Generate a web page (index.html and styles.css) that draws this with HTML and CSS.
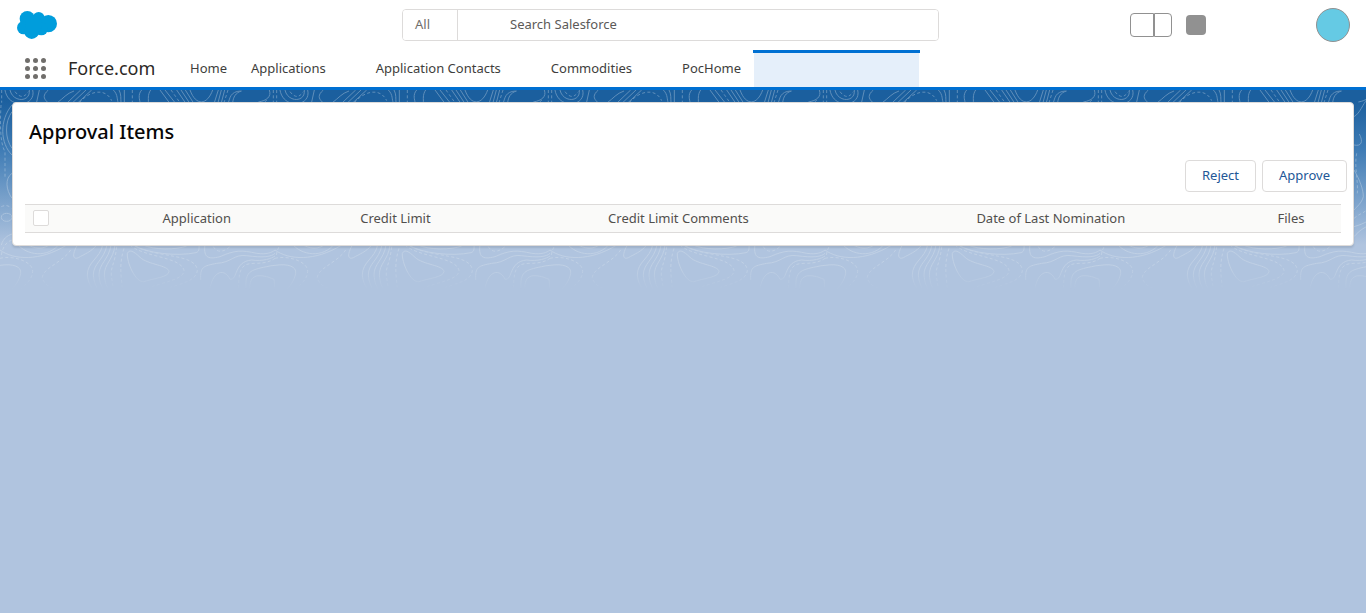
FILE: index.html
```
<!DOCTYPE html>
<html lang="en">
<head>
<meta charset="utf-8">
<title>Approval Items | Salesforce</title>
<link rel="stylesheet" href="styles.css">
</head>
<body>
<header class="header">
  <div class="topbar">
    <a class="logo" href="#" aria-label="Salesforce">
      <svg width="40" height="28" viewBox="0 0 120 84" fill="#009ddc" aria-hidden="true">
        <circle cx="31" cy="23" r="23"/><circle cx="65" cy="21" r="18"/><circle cx="94" cy="38" r="26"/>
        <circle cx="20" cy="50" r="20"/><circle cx="44" cy="62" r="22"/><circle cx="73" cy="53" r="20"/><circle cx="50" cy="40" r="26"/>
      </svg>
    </a>
    <form class="search">
      <button class="search-scope" type="button">All</button>
      <input class="search-input" type="search" placeholder="Search Salesforce" aria-label="Search Salesforce">
    </form>
    <div class="actions">
      <div class="favorites">
        <button class="fav fav-add" type="button" aria-label="Add favorite"></button>
        <button class="fav fav-list" type="button" aria-label="Favorites list"></button>
      </div>
      <button class="quick" type="button" aria-label="Global actions"></button>
      <button class="avatar" type="button" aria-label="View profile"></button>
    </div>
  </div>
  <nav class="nav" aria-label="Main">
    <button class="launcher" type="button" aria-label="App Launcher">
      <svg width="21" height="21" viewBox="0 0 21 21" fill="#706e6b" aria-hidden="true">
        <circle cx="2.500" cy="2.500" r="2.500"/><circle cx="10.500" cy="2.500" r="2.500"/><circle cx="18.500" cy="2.500" r="2.500"/>
        <circle cx="2.500" cy="10.500" r="2.500"/><circle cx="10.500" cy="10.500" r="2.500"/><circle cx="18.500" cy="10.500" r="2.500"/>
        <circle cx="2.500" cy="18.500" r="2.500"/><circle cx="10.500" cy="18.500" r="2.500"/><circle cx="18.500" cy="18.500" r="2.500"/>
      </svg>
    </button>
    <span class="app-name">Force.com</span>
    <a class="tab" href="#">Home</a>
    <a class="tab tab-menu" href="#">Applications</a>
    <a class="tab tab-menu" href="#">Application Contacts</a>
    <a class="tab tab-menu" href="#">Commodities</a>
    <a class="tab" href="#">PocHome</a>
    <a class="tab tab-active" href="#" aria-label="Current page" aria-current="page"></a>
  </nav>
</header>
<main class="page">
  <svg class="contours" width="100%" height="200" aria-hidden="true">
    <defs>
      <linearGradient id="fade" x1="0" y1="0" x2="0" y2="1">
        <stop offset="0.88" stop-color="#fff"/><stop offset="1" stop-color="#000"/>
      </linearGradient>
      <mask id="fade-mask"><rect width="100%" height="200" fill="url(#fade)"/></mask>
      <pattern id="topo" width="275" height="200" patternUnits="userSpaceOnUse" viewBox="0 0 825 600">
        <g fill="none" stroke="#dde6ee" stroke-width="3">
          <path d="M15 0C25 60 110 50 98 0M30 0C38 38 92 38 88 0M118 0L110 36M145 0C128 15 130 25 142 36M222 3C200 10 190 25 172 38M242 0L202 38M258 0L218 38M275 0L234 38M340 0C355 15 350 30 355 38M357 0C364 12 362 26 363 38M373 0V38M425 0C412 15 420 30 420 38M452 0C442 15 446 28 445 38M480 0L508 38M495 0L525 38M530 0L556 38M543 0L568 38M556 0L580 38M570 0C588 50 622 45 638 0M655 0L643 38M664 0L654 38M674 0L664 38M722 3C690 5 690 25 685 38M725 3C706 8 700 22 698 38M808 0C815 20 800 32 775 36"/>
          <path stroke-dasharray="9 7" d="M45 5C60 24 72 24 85 5M5 0V38M238 38C265 5 315 -10 335 32M397 0V38M513 0L540 38M684 0L672 38M820 0V38"/>
          <path d="M36 45C-2 90 0 160 36 195M36 65C14 95 14 145 36 175M36 250C14 265 18 300 36 325M4 382C4 366 36 366 36 382S4 398 4 382M4 465C10 445 20 438 36 432M762 80C780 70 790 40 800 30M762 165C785 170 790 155 778 132M762 240C780 270 790 300 790 320C785 340 770 350 762 360M762 410C780 405 790 400 800 395M762 440C780 420 790 415 800 410"/>
          <path stroke-dasharray="9 7" d="M3 45C0 100 0 160 15 185V260M4 350C15 345 25 345 34 355M4 495C8 470 20 455 36 450M770 190C762 230 775 270 772 310M762 385C780 370 790 370 800 360"/>
          <path d="M382 490C388 478 400 482 420 502C445 525 505 525 507 545C505 562 460 565 432 575C405 578 380 515 382 490ZM308 465C300 505 262 515 262 555C264 578 272 590 280 600M321 465C312 510 280 520 280 555C282 578 288 590 296 600M333 465C326 510 297 520 297 555C299 578 304 590 312 600M345 465C340 510 313 520 313 555C315 578 320 590 326 600M290 465C275 485 252 493 235 503C218 510 216 494 232 465M50 460C80 498 145 505 180 460M0 480C40 510 120 515 200 465M75 460C105 478 130 480 155 460M400 465C440 490 530 500 588 488C600 484 597 472 597 460M430 465C460 480 530 480 560 468M615 460C610 500 620 510 660 500C705 480 725 480 770 490C800 494 815 488 825 480M602 570C600 530 610 528 650 520C695 518 700 492 740 497C790 504 815 500 825 490M630 595C640 540 675 535 690 568C715 570 700 515 755 510C790 515 815 505 825 498M738 595C735 545 750 540 800 530Q812 527 825 526M0 526C40 520 65 530 62 550C58 572 45 590 32 600M750 600C745 550 780 550 822 568L825 600"/>
          <path stroke-dasharray="9 7" d="M212 480C185 520 125 535 127 565C135 590 160 595 175 600M0 505C40 495 100 515 98 545C95 570 80 580 60 600M350 470C345 520 332 530 334 555L340 600M372 475C360 515 360 540 368 600M390 465C430 502 545 500 552 542C550 570 490 575 445 595M405 468C470 504 590 490 592 542C588 575 540 580 500 597M640 470C655 495 680 480 692 468M715 595C718 540 720 520 765 520C800 520 815 512 825 505"/>
        </g>
      </pattern>
    </defs>
    <rect width="100%" height="200" fill="url(#topo)" opacity="0.35" mask="url(#fade-mask)"/>
  </svg>
  <section class="card">
    <h1 class="title">Approval Items</h1>
    <div class="buttons">
      <button class="btn" type="button">Reject</button>
      <button class="btn" type="button">Approve</button>
    </div>
    <table class="table">
      <colgroup>
        <col class="col-check"><col class="col-app"><col class="col-limit"><col class="col-comments"><col class="col-date"><col class="col-files">
      </colgroup>
      <thead>
        <tr>
          <th class="check-cell"><input class="check" type="checkbox" aria-label="Select all"></th>
          <th>Application</th>
          <th>Credit Limit</th>
          <th>Credit Limit Comments</th>
          <th>Date of Last Nomination</th>
          <th>Files</th>
        </tr>
      </thead>
    </table>
  </section>
</main>
</body>
</html>
```
FILE: styles.css
```
* { box-sizing: border-box; }
html { height: 100%; }
body {
  margin: 0;
  min-height: 100%;
  display: flex;
  flex-direction: column;
  background: #b0c4df;
  color: #3e3e3c;
  font: 13px/20px "Noto Sans", "Open Sans", sans-serif;
}
button, input { font: inherit; color: inherit; margin: 0; padding: 0; }
a { color: inherit; text-decoration: none; }

.header { background: #fff; border-bottom: 3px solid #0070d2; }
.topbar {
  display: grid;
  grid-template-columns: 385fr 537fr 411fr;
  align-items: center;
  height: 50px;
  padding: 0 16px 0 17px;
}
.logo, .logo svg { display: block; width: 40px; }
.search {
  display: flex;
  height: 32px;
  border: 1px solid #dddbda;
  border-radius: 4px;
  overflow: hidden;
}
.search-scope {
  width: 55px;
  padding: 0 0 2px 12px;
  border: 0;
  border-right: 1px solid #dddbda;
  background: #fff;
  color: #706e6b;
  text-align: left;
}
.search-input {
  flex: 1;
  min-width: 0;
  padding: 0 12px 2px 52px;
  border: 0;
  background: #fff;
  outline: 0;
  appearance: none;
}
.search-input::placeholder { color: #5c5a58; opacity: 1; }
.actions { display: flex; align-items: center; justify-content: flex-end; }
.favorites { display: flex; margin-right: 14px; }
.fav { height: 24px; border: 1px solid #919191; background: #fff; }
.fav-add { width: 24px; border-radius: 4px 0 0 4px; }
.fav-list { width: 18px; border-radius: 0 4px 4px 0; }
.quick { width: 20px; height: 20px; margin-right: 110px; border: 0; border-radius: 4px; background: #919191; }
.avatar { width: 34px; height: 34px; border: 1px solid #919191; border-radius: 50%; background: #65cae4; }

.nav { display: flex; align-items: stretch; height: 37px; padding-left: 25px; }
.launcher { width: 21px; border: 0; background: none; display: flex; align-items: center; }
.app-name { width: 132px; padding-left: 22px; font-size: 18px; line-height: 37px; color: #2b2826; }
.tab { padding: 0 12px; line-height: 37px; white-space: nowrap; }
.tab-menu { padding-right: 38px; }
.tab-active {
  width: 167px;
  padding: 0 1px;
  border-top: 3px solid #0070d2;
  background: #e5effa content-box;
}

.page {
  display: grid;
  flex: 1;
  align-content: start;
  background: linear-gradient(#1b5f9e 10px, #3f7cb5 60px, #b0c4df 155px);
}
.contours { grid-area: 1 / 1; display: block; }
.card {
  grid-area: 1 / 1;
  align-self: start;
  margin: 12px;
  padding: 0 0 12px;
  border: 1px solid #dddbda;
  border-radius: 4px;
  background: #fff;
  box-shadow: 0 2px 2px rgba(0, 0, 0, 0.1);
  z-index: 1;
}
.title { margin: 0; padding: 16px 16px 0; font-size: 20px; font-weight: 500; line-height: 25px; color: #080707; }
.buttons { display: flex; justify-content: flex-end; gap: 6px; padding: 16px 6px 12px; }
.btn {
  height: 32px;
  padding: 0 16px 2px;
  border: 1px solid #dddbda;
  border-radius: 4px;
  background: #fff;
  color: #225797;
}
.table {
  width: calc(100% - 24px);
  margin: 0 12px;
  table-layout: fixed;
  border-collapse: separate;
  border-spacing: 0;
  background: #fafaf9;
  border: solid #dddbda;
  border-width: 1px 0;
}
.table th { height: 27px; padding: 0 0 2px; font-weight: 400; text-align: center; color: #514f4d; }
.table .check-cell { padding-left: 8px; text-align: left; }
.check {
  appearance: none;
  display: block;
  width: 16px;
  height: 16px;
  border: 1px solid #dddbda;
  border-radius: 2px;
  background: #fff;
}
.col-check { width: 5.6%; }
.col-app { width: 14.9%; }
.col-limit { width: 15.3%; }
.col-comments { width: 27.7%; }
.col-date { width: 28.9%; }
.col-files { width: 7.6%; }
```
